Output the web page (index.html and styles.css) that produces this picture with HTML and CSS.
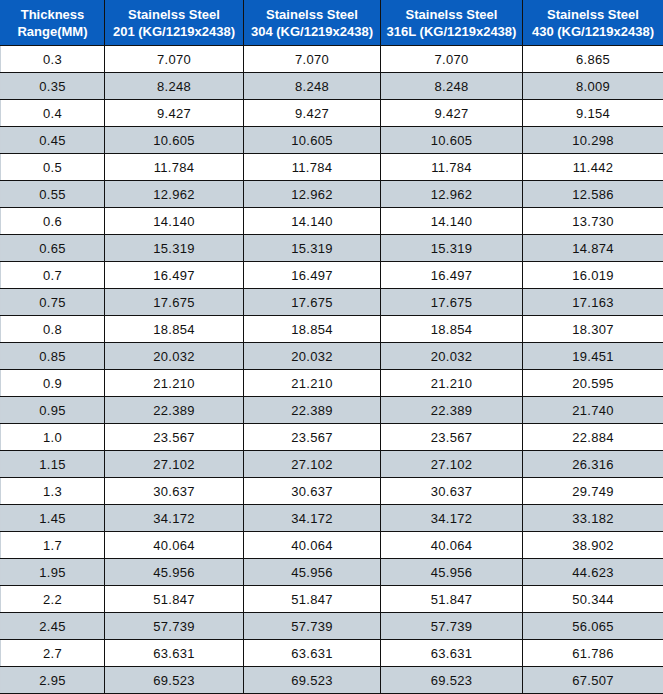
FILE: index.html
```html
<!DOCTYPE html>
<html>
<head>
<meta charset="utf-8">
<link rel="stylesheet" href="styles.css">
</head>
<body>
<table class="tbl">
<colgroup>
<col class="c1"><col class="c2"><col class="c3"><col class="c4"><col class="c5">
</colgroup>
<thead>
<tr>
<th>Thickness<br>Range(MM)</th>
<th>Stainelss Steel<br>201 (KG/1219x2438)</th>
<th>Stainelss Steel<br>304 (KG/1219x2438)</th>
<th>Stainelss Steel<br>316L (KG/1219x2438)</th>
<th>Stainelss Steel<br>430 (KG/1219x2438)</th>
</tr>
</thead>
<tbody>
<tr><td>0.3</td><td>7.070</td><td>7.070</td><td>7.070</td><td>6.865</td></tr>
<tr class="alt"><td>0.35</td><td>8.248</td><td>8.248</td><td>8.248</td><td>8.009</td></tr>
<tr><td>0.4</td><td>9.427</td><td>9.427</td><td>9.427</td><td>9.154</td></tr>
<tr class="alt"><td>0.45</td><td>10.605</td><td>10.605</td><td>10.605</td><td>10.298</td></tr>
<tr><td>0.5</td><td>11.784</td><td>11.784</td><td>11.784</td><td>11.442</td></tr>
<tr class="alt"><td>0.55</td><td>12.962</td><td>12.962</td><td>12.962</td><td>12.586</td></tr>
<tr><td>0.6</td><td>14.140</td><td>14.140</td><td>14.140</td><td>13.730</td></tr>
<tr class="alt"><td>0.65</td><td>15.319</td><td>15.319</td><td>15.319</td><td>14.874</td></tr>
<tr><td>0.7</td><td>16.497</td><td>16.497</td><td>16.497</td><td>16.019</td></tr>
<tr class="alt"><td>0.75</td><td>17.675</td><td>17.675</td><td>17.675</td><td>17.163</td></tr>
<tr><td>0.8</td><td>18.854</td><td>18.854</td><td>18.854</td><td>18.307</td></tr>
<tr class="alt"><td>0.85</td><td>20.032</td><td>20.032</td><td>20.032</td><td>19.451</td></tr>
<tr><td>0.9</td><td>21.210</td><td>21.210</td><td>21.210</td><td>20.595</td></tr>
<tr class="alt"><td>0.95</td><td>22.389</td><td>22.389</td><td>22.389</td><td>21.740</td></tr>
<tr><td>1.0</td><td>23.567</td><td>23.567</td><td>23.567</td><td>22.884</td></tr>
<tr class="alt"><td>1.15</td><td>27.102</td><td>27.102</td><td>27.102</td><td>26.316</td></tr>
<tr><td>1.3</td><td>30.637</td><td>30.637</td><td>30.637</td><td>29.749</td></tr>
<tr class="alt"><td>1.45</td><td>34.172</td><td>34.172</td><td>34.172</td><td>33.182</td></tr>
<tr><td>1.7</td><td>40.064</td><td>40.064</td><td>40.064</td><td>38.902</td></tr>
<tr class="alt"><td>1.95</td><td>45.956</td><td>45.956</td><td>45.956</td><td>44.623</td></tr>
<tr><td>2.2</td><td>51.847</td><td>51.847</td><td>51.847</td><td>50.344</td></tr>
<tr class="alt"><td>2.45</td><td>57.739</td><td>57.739</td><td>57.739</td><td>56.065</td></tr>
<tr><td>2.7</td><td>63.631</td><td>63.631</td><td>63.631</td><td>61.786</td></tr>
<tr class="alt"><td>2.95</td><td>69.523</td><td>69.523</td><td>69.523</td><td>67.507</td></tr>
</tbody>
</table>
</body>
</html>
```

FILE: styles.css
```css
html, body {
  margin: 0;
  padding: 0;
  background: #ffffff;
}
.tbl {
  border-collapse: collapse;
  table-layout: fixed;
  width: 663px;
  font-family: "Liberation Sans", Arial, sans-serif;
  color: #111111;
}
.c1 { width: 104px; }
.c2 { width: 139px; }
.c3 { width: 137px; }
.c4 { width: 142px; }
.c5 { width: 141px; }
.tbl th {
  background: #0a5ebf;
  color: #ffffff;
  font-size: 13px;
  font-weight: bold;
  line-height: 17px;
  height: 44px;
  padding: 0;
  border: 1px solid #111111;
  border-top-color: #0a5ebf;
  text-align: center;
  vertical-align: middle;
}
.tbl th:first-child { border-left-color: #0a5ebf; }
.tbl th:last-child { border-right-color: #0a5ebf; }
.tbl td {
  font-size: 13px;
  letter-spacing: 0.3px;
  height: 26px;
  padding: 0;
  border: 1px solid #111111;
  text-align: center;
  vertical-align: middle;
}
.tbl td:first-child { border-left-color: #c9d2da; }
.tbl td:last-child { border-right-color: #c9d2da; }
.tbl .alt td { background: #c9d3db; }
```
